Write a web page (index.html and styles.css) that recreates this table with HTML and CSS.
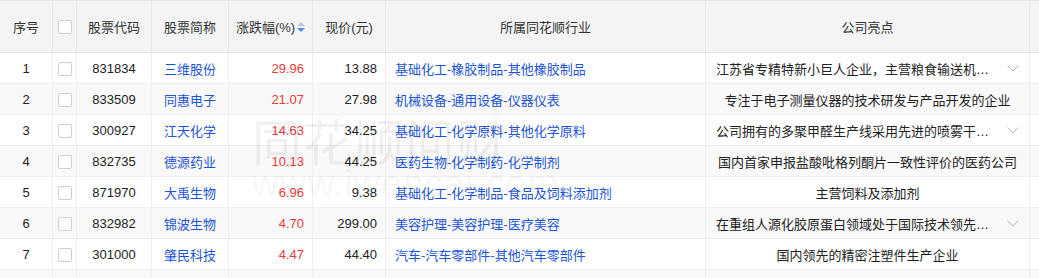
FILE: index.html
```html
<!DOCTYPE html>
<html lang="zh-CN">
<head>
<meta charset="utf-8">
<title>问财选股结果</title>
<link rel="stylesheet" href="styles.css">
</head>
<body>
<div class="wrap">
  <table class="grid">
    <colgroup>
      <col class="c-idx"><col class="c-chk"><col class="c-code"><col class="c-name"><col class="c-chg"><col class="c-price"><col class="c-ind"><col class="c-hl"><col class="c-more">
    </colgroup>
    <thead>
      <tr>
        <th>序号</th>
        <th><span class="chk"></span></th>
        <th>股票代码</th>
        <th>股票简称</th>
        <th><span class="sortable">涨跌幅(%)<span class="sort"><i class="up"></i><i class="down"></i></span></span></th>
        <th>现价(元)</th>
        <th>所属同花顺行业</th>
        <th>公司亮点</th>
        <th></th>
      </tr>
    </thead>
    <tbody>
      <tr>
        <td class="ctr">1</td><td class="ctr"><span class="chk"></span></td><td class="ctr">831834</td><td class="ctr link">三维股份</td>
        <td class="num red">29.96</td><td class="num">13.88</td><td class="link ind">基础化工-橡胶制品-其他橡胶制品</td>
        <td class="hl"><div class="more"><span class="txt">江苏省专精特新小巨人企业，主营粮食输送机…</span><svg class="chev" width="12" height="7" viewBox="0 0 12 7"><path d="M0.5 0.5 L6 6 L11.5 0.5" fill="none" stroke="#b4b4b4" stroke-width="1"/></svg></div></td><td></td>
      </tr>
      <tr>
        <td class="ctr">2</td><td class="ctr"><span class="chk"></span></td><td class="ctr">833509</td><td class="ctr link">同惠电子</td>
        <td class="num red">21.07</td><td class="num">27.98</td><td class="link ind">机械设备-通用设备-仪器仪表</td>
        <td class="ctr">专注于电子测量仪器的技术研发与产品开发的企业</td><td></td>
      </tr>
      <tr>
        <td class="ctr">3</td><td class="ctr"><span class="chk"></span></td><td class="ctr">300927</td><td class="ctr link">江天化学</td>
        <td class="num red">14.63</td><td class="num">34.25</td><td class="link ind">基础化工-化学原料-其他化学原料</td>
        <td class="hl"><div class="more"><span class="txt">公司拥有的多聚甲醛生产线采用先进的喷雾干…</span><svg class="chev" width="12" height="7" viewBox="0 0 12 7"><path d="M0.5 0.5 L6 6 L11.5 0.5" fill="none" stroke="#b4b4b4" stroke-width="1"/></svg></div></td><td></td>
      </tr>
      <tr>
        <td class="ctr">4</td><td class="ctr"><span class="chk"></span></td><td class="ctr">832735</td><td class="ctr link">德源药业</td>
        <td class="num red">10.13</td><td class="num">44.25</td><td class="link ind">医药生物-化学制药-化学制剂</td>
        <td class="ctr">国内首家申报盐酸吡格列酮片一致性评价的医药公司</td><td></td>
      </tr>
      <tr>
        <td class="ctr">5</td><td class="ctr"><span class="chk"></span></td><td class="ctr">871970</td><td class="ctr link">大禹生物</td>
        <td class="num red">6.96</td><td class="num">9.38</td><td class="link ind">基础化工-化学制品-食品及饲料添加剂</td>
        <td class="ctr">主营饲料及添加剂</td><td></td>
      </tr>
      <tr>
        <td class="ctr">6</td><td class="ctr"><span class="chk"></span></td><td class="ctr">832982</td><td class="ctr link">锦波生物</td>
        <td class="num red">4.70</td><td class="num">299.00</td><td class="link ind">美容护理-美容护理-医疗美容</td>
        <td class="hl"><div class="more"><span class="txt">在重组人源化胶原蛋白领域处于国际技术领先…</span><svg class="chev" width="12" height="7" viewBox="0 0 12 7"><path d="M0.5 0.5 L6 6 L11.5 0.5" fill="none" stroke="#b4b4b4" stroke-width="1"/></svg></div></td><td></td>
      </tr>
      <tr>
        <td class="ctr">7</td><td class="ctr"><span class="chk"></span></td><td class="ctr">301000</td><td class="ctr link">肇民科技</td>
        <td class="num red">4.47</td><td class="num">44.40</td><td class="link ind">汽车-汽车零部件-其他汽车零部件</td>
        <td class="ctr">国内领先的精密注塑件生产企业</td><td></td>
      </tr>
      <tr>
        <td></td><td></td><td></td><td></td><td></td><td></td><td></td><td></td><td></td>
      </tr>
    </tbody>
  </table>
  <div class="watermark" aria-hidden="true">
    <div class="wm-cn">同花顺问财</div>
    <div class="wm-en">www.iwencai.com</div>
  </div>
</div>
</body>
</html>
```

FILE: styles.css
```css
html, body {
  margin: 0;
  padding: 0;
  background: #ffffff;
  overflow: hidden;
}

body {
  font-family: "Liberation Sans", "Noto Sans CJK SC", sans-serif;
  font-size: 13px;
  color: #333333;
}

.wrap {
  position: relative;
  width: 1039px;
  height: 278px;
  overflow: hidden;
}

.grid {
  table-layout: fixed;
  border-collapse: separate;
  border-spacing: 0;
  width: 1130px;
  border-top: 1px solid #e6e6e6;
}

.c-idx { width: 53px; }
.c-chk { width: 24px; }
.c-code { width: 75px; }
.c-name { width: 77px; }
.c-chg { width: 84px; }
.c-price { width: 73px; }
.c-ind { width: 320px; }
.c-hl { width: 324px; }
.c-more { width: 100px; }

.grid th,
.grid td {
  padding: 0;
  border-right: 1px solid #efefef;
  border-bottom: 1px solid #efefef;
  white-space: nowrap;
  overflow: hidden;
  vertical-align: middle;
}

.grid th {
  height: 51px;
  background: #f4f4f4;
  font-weight: normal;
  text-align: center;
  color: #333333;
  border-right-color: #e8e8e8;
  border-bottom-color: #e8e8e8;
}

.grid td {
  height: 30px;
  color: #222222;
}

.grid tbody tr:nth-child(even) td {
  background: #f9f9f9;
}

.ctr { text-align: center; }

.num {
  text-align: right;
  padding-right: 8px !important;
}

.red { color: #eb3b3b !important; }

.link { color: #1c55d8 !important; }

.ind {
  padding-left: 9px !important;
}

.chk {
  display: inline-block;
  width: 12px;
  height: 12px;
  border: 1px solid #cfcfcf;
  border-radius: 2px;
  background: #ffffff;
  vertical-align: middle;
}

.sortable {
  display: inline-flex;
  align-items: center;
}

.sort {
  display: inline-flex;
  flex-direction: column;
  margin-left: 2px;
  gap: 2px;
}

.sort i {
  display: block;
  width: 0;
  height: 0;
  border-left: 4px solid transparent;
  border-right: 4px solid transparent;
}

.sort .up { border-bottom: 4px solid #c0c4cc; }
.sort .down { border-top: 4px solid #4d8ff0; }

.hl {
  padding: 0 10px !important;
}

.more {
  display: flex;
  align-items: center;
}

.more .txt {
  flex: 1;
  overflow: hidden;
  text-overflow: ellipsis;
}

.chev {
  flex: none;
  margin-left: 14px;
  margin-top: 1px;
}

.watermark {
  position: absolute;
  left: 252px;
  top: 110px;
  pointer-events: none;
  color: rgba(0, 0, 0, 0.055);
  text-align: left;
}

.wm-cn {
  font-family: "Noto Sans CJK SC", sans-serif;
  font-size: 50px;
  line-height: 58px;
  letter-spacing: 1px;
}

.wm-en {
  font-family: "Liberation Sans", sans-serif;
  font-size: 37px;
  line-height: 40px;
  margin-top: -4px;
  letter-spacing: 1px;
}
```
